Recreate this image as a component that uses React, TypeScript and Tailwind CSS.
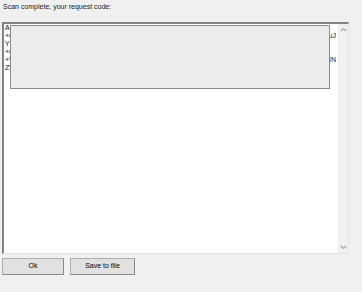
import React from 'react'

// left part is hidden under the overlay, right part peeks out at the edge
const codeLines: [string, string][] = [
  ['AQKZbGx0cFNkaXJ3bGZ4Y2JhZ3ZpcmVvcHFhd2V0cnlocmx3cXRrcGF1aGFwbmV3', ''],
  ['+QmVjb3JkU2NhbkNvZGVLZXlSZXF1ZXN0MjAxOXZpcmxpY2Vuc2VpbmJ1dGhlcmVpc2FyZWFs', 'uJ'],
  ['Y3VzdG9tZXJJRGxpY2Vuc2VLZXlNYWNoaW5lSURwcm9kdWN0', ''],
  ['+QWN0aXZhdGlvblJlcXVlc3RWZXJzaW9uMy4yLjE', ''],
  ['+Vm9sdW1lU2VyaWFsSGFyZHdhcmVIYXNoQ2hlY2tzdW1Db2RlQmxvY2tJbmZvcm1hdGlvbg', 'IN'],
  ['ZW5kT2ZSZXF1ZXN0Q29kZQ==', ''],
]

function Chevron({ up }: { up?: boolean }) {
  return (
    <svg width="7" height="5" viewBox="0 0 7 5" className="block">
      <path
        d={up ? 'M1 4 L3.5 1.5 L6 4' : 'M1 1 L3.5 3.5 L6 1'}
        fill="none"
        stroke="#a6a6a6"
        strokeWidth="1.2"
      />
    </svg>
  )
}

export default function App() {
  return (
    <div className="relative w-[362px] h-[292px] overflow-hidden bg-[#f0f0f0] font-['Liberation_Sans',Arial,sans-serif] text-[7px] text-black">
      {/* Label */}
      <div className="h-[22px] pl-[3px] pt-[3px] leading-[8px] text-[#1a1a1a]">
        Scan complete, your request code:
      </div>

      {/* Request code box */}
      <div className="ml-[2px] flex h-[232px] w-[347px] border-t-2 border-l-2 border-r border-b border-t-[#828282] border-l-[#828282] border-r-[#e3e3e3] border-b-[#e3e3e3]">
        <div className="flex-1 overflow-hidden bg-white pl-px pr-[2px] leading-[8px] text-[#222]">
          {codeLines.map(([left, right], i) => (
            <div key={i} className="flex whitespace-nowrap">
              <span className="min-w-0 flex-1 overflow-hidden">{left}</span>
              <span>{right}</span>
            </div>
          ))}
        </div>
        <div className="flex w-[10px] flex-col items-center justify-between bg-[#f0f0f0] py-[3px]">
          <Chevron up />
          <Chevron />
        </div>
      </div>

      {/* Buttons */}
      <div className="ml-[2px] mt-[4px] flex gap-[6px]">
        <button className="h-[17px] w-[62px] border border-[#adadad] border-r-[#8a8a8a] border-b-[#8a8a8a] bg-[#e1e1e1] text-[7px] text-black">
          Ok
        </button>
        <button className="h-[17px] w-[65px] border border-[#adadad] border-r-[#8a8a8a] border-b-[#8a8a8a] bg-[#e1e1e1] text-[7px] text-black">
          Save to file
        </button>
      </div>

      {/* Overlay panel covering the code */}
      <div className="absolute left-[10px] top-[25px] h-[64px] w-[320px] border border-[#8c8c8c] bg-[#ececec]" />
    </div>
  )
}
